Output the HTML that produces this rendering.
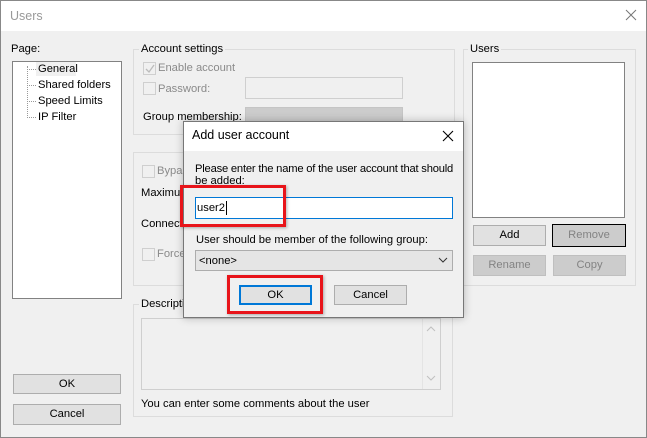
<!DOCTYPE html>
<html><head><style>
*{box-sizing:border-box;margin:0;padding:0}
body{width:647px;height:438px;background:#fff;font-family:"Liberation Sans",sans-serif;font-size:11.2px;color:#000;position:relative;overflow:hidden}
.a{position:absolute}
.t{position:absolute;white-space:nowrap;line-height:14px}
.g{color:#8a8a8a}
.gb{position:absolute;border:1px solid #dcdcdc}
.lbl{position:absolute;background:#f0f0f0;padding:0 2px;line-height:14px;white-space:nowrap}
.cb{position:absolute;width:13px;height:13px;border:1px solid #cfcfcf;background:#f0f0f0}
.btn{position:absolute;background:#e1e1e1;border:1px solid #adadad;text-align:center;line-height:18px}
.dis{background:#ccc;border-color:#bfbfbf;color:#838383}
</style></head><body>
<div class="a" style="left:0;top:0;width:647px;height:438px;border:1px solid #888;background:#f0f0f0"></div>
<div class="a" style="left:1px;top:1px;width:645px;height:30px;background:#fff"></div>
<div class="t g" style="left:10px;top:9px;font-size:12.5px;color:#999">Users</div>
<svg class="a" style="left:625px;top:9px" width="12" height="12"><path d="M1 1L11 11M11 1L1 11" stroke="#777" stroke-width="1"/></svg>

<div class="t" style="left:11px;top:42px">Page:</div>
<div class="a" style="left:12px;top:61px;width:110px;height:238px;background:#fff;border:1px solid #828282"></div>
<div class="a" style="left:36px;top:62px;width:40px;height:14px;background:#f0f0f0"></div>
<div class="a" style="left:27px;top:66px;height:50px;border-left:1px dotted #999"></div>
<div class="a" style="left:27px;top:69px;width:9px;border-top:1px dotted #999"></div>
<div class="a" style="left:27px;top:85px;width:9px;border-top:1px dotted #999"></div>
<div class="a" style="left:27px;top:101px;width:9px;border-top:1px dotted #999"></div>
<div class="a" style="left:27px;top:117px;width:9px;border-top:1px dotted #999"></div>
<div class="t" style="left:38px;top:62px">General</div>
<div class="t" style="left:38px;top:78px">Shared folders</div>
<div class="t" style="left:38px;top:94px">Speed Limits</div>
<div class="t" style="left:38px;top:110px">IP Filter</div>

<div class="btn" style="left:13px;top:374px;width:108px;height:20px">OK</div>
<div class="btn" style="left:13px;top:404px;width:108px;height:21px">Cancel</div>

<div class="gb" style="left:133px;top:49px;width:322px;height:86px"></div>
<div class="lbl" style="left:139px;top:42px">Account settings</div>
<div class="cb" style="left:143px;top:62px"></div>
<svg class="a" style="left:144px;top:63px" width="12" height="12"><path d="M2 6L5 9L10 2" stroke="#bbb" fill="none" stroke-width="1.3"/></svg>
<div class="t g" style="left:158px;top:61px">Enable account</div>
<div class="cb" style="left:143px;top:82px"></div>
<div class="t g" style="left:158px;top:82px">Password:</div>
<div class="a" style="left:245px;top:77px;width:158px;height:22px;border:1px solid #cfcfcf;background:#f0f0f0"></div>
<div class="t" style="left:143px;top:110px">Group membership:</div>
<div class="a" style="left:245px;top:107px;width:158px;height:22px;background:#ccc;border:1px solid #c5c5c5"></div>

<div class="gb" style="left:133px;top:152px;width:322px;height:134px"></div>
<div class="cb" style="left:142px;top:165px"></div>
<div class="t g" style="left:157px;top:164px">Bypass</div>
<div class="t" style="left:141px;top:186px">Maximum</div>
<div class="t" style="left:141px;top:217px">Connection</div>
<div class="cb" style="left:142px;top:248px"></div>
<div class="t g" style="left:157px;top:247px">Force</div>

<div class="gb" style="left:133px;top:304px;width:320px;height:113px"></div>
<div class="lbl" style="left:139px;top:297px">Description</div>
<div class="a" style="left:141px;top:318px;width:300px;height:72px;border:1px solid #cfcfcf;background:#f0f0f0"></div>
<div class="a" style="left:422px;top:319px;width:18px;height:70px;border-left:1px solid #e4e4e4"></div>
<svg class="a" style="left:426px;top:326px" width="10" height="6"><path d="M1 5L5 1L9 5" stroke="#c0c0c0" fill="none"/></svg>
<svg class="a" style="left:426px;top:375px" width="10" height="6"><path d="M1 1L5 5L9 1" stroke="#c0c0c0" fill="none"/></svg>
<div class="t" style="left:141px;top:397px">You can enter some comments about the user</div>

<div class="gb" style="left:463px;top:49px;width:173px;height:237px"></div>
<div class="lbl" style="left:468px;top:42px">Users</div>
<div class="a" style="left:472px;top:62px;width:153px;height:156px;background:#fff;border:1px solid #828282"></div>
<div class="btn" style="left:473px;top:225px;width:73px;height:21px">Add</div>
<div class="btn dis" style="left:552px;top:224px;width:74px;height:23px;border:1px solid #000;line-height:21px">Remove</div>
<div class="btn dis" style="left:473px;top:255px;width:73px;height:21px">Rename</div>
<div class="btn dis" style="left:553px;top:255px;width:73px;height:21px">Copy</div>

<!-- dialog -->
<div class="a" style="left:183px;top:121px;width:281px;height:197px;border:1px solid #777;background:#f0f0f0;box-shadow:0 0 8px rgba(0,0,0,.25)"></div>
<div class="a" style="left:184px;top:122px;width:279px;height:29px;background:#fff"></div>
<div class="t" style="left:192px;top:128px;font-size:12.5px">Add user account</div>
<svg class="a" style="left:442px;top:130px" width="12" height="12"><path d="M1 1L11 11M11 1L1 11" stroke="#000" stroke-width="1.1"/></svg>
<div class="t" style="left:195px;top:162px;letter-spacing:-0.2px">Please enter the name of the user account that should</div>
<div class="t" style="left:195px;top:174px">be added:</div>
<div class="a" style="left:195px;top:197px;width:258px;height:22px;background:#fff;border:1px solid #0078d7"></div>
<div class="t" style="left:197px;top:201px">user2</div>
<div class="a" style="left:226px;top:201px;width:1px;height:14px;background:#000"></div>
<div class="a" style="left:180px;top:185px;width:106px;height:42px;border:3px solid #e8141a;box-shadow:1px 1px 3px rgba(0,0,0,.3)"></div>
<div class="t" style="left:196px;top:233px">User should be member of the following group:</div>
<div class="a" style="left:195px;top:250px;width:258px;height:21px;background:#e5e5e5;border:1px solid #adadad"></div>
<div class="t" style="left:199px;top:254px">&lt;none&gt;</div>
<svg class="a" style="left:438px;top:257px" width="10" height="6"><path d="M1 1L5 5L9 1" stroke="#333" fill="none"/></svg>
<div class="btn" style="left:239px;top:285px;width:73px;height:20px;border:2px solid #0078d7;line-height:16px">OK</div>
<div class="a" style="left:227px;top:275px;width:96px;height:39px;border:3px solid #e8141a;box-shadow:1px 1px 3px rgba(0,0,0,.3)"></div>
<div class="btn" style="left:334px;top:285px;width:73px;height:20px">Cancel</div>
</body></html>
